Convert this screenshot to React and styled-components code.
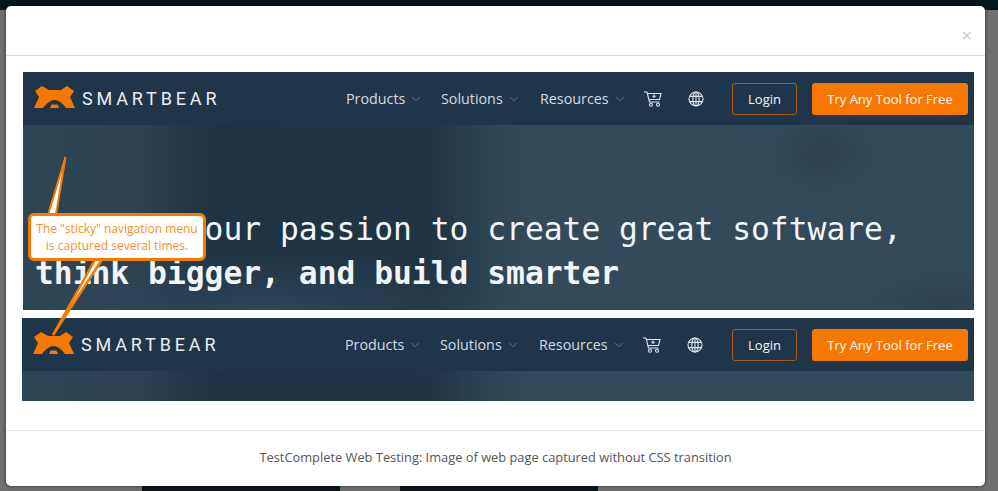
import React from 'react';
import styled, { createGlobalStyle } from 'styled-components';
import { ChevronDown } from 'lucide-react';

const Global = createGlobalStyle`
  html, body { margin: 0; padding: 0; }
  body { font-family: 'Open Sans', sans-serif; background: #6b6b6b; }
`;

const Backdrop = styled.div`
  position: relative;
  width: 998px;
  height: 491px;
  overflow: hidden;
  background: #707070;
`;

const TopBand = styled.div`
  height: 10px;
  background: #06161d;
`;

const BottomBlocks = styled.div`
  position: absolute;
  left: 142px;
  bottom: 0;
  display: flex;
  gap: 60px;
`;

const BottomBlock = styled.div`
  width: 198px;
  height: 8px;
  background: #06161d;
`;

const Modal = styled.div`
  position: absolute;
  left: 6px;
  top: 6px;
  width: 979px;
  height: 480px;
  background: #fff;
  border-radius: 5px;
  box-shadow: 0 0 4px rgba(0, 0, 0, 0.55);
  display: flex;
  flex-direction: column;
`;

const ModalHeader = styled.div`
  flex: none;
  height: 50px;
  box-sizing: border-box;
  border-bottom: 1px solid #dedede;
  display: flex;
  justify-content: flex-end;
  align-items: flex-end;
  padding: 0 13px 11px 0;
`;

const Close = styled.span`
  font-size: 18px;
  line-height: 18px;
  color: #c8c8c8;
`;

const ModalBody = styled.div`
  flex: 1;
  padding: 16px 11px 0 16px;
`;

const Shot = styled.div`
  margin-left: ${(p) => p.$left}px;
  display: flex;
  flex-direction: column;
`;

const Nav = styled.div`
  height: 53px;
  background: #1f364a;
  display: flex;
  align-items: center;
  padding: 0 6px 0 11px;
  flex: none;
`;

const Logo = styled.div`
  display: flex;
  align-items: center;
  gap: 7px;
  width: 312px;
  flex: none;
`;

const LogoMark = styled.svg`
  margin-bottom: 3px;
  flex: none;
`;

const Wordmark = styled.span`
  font-family: 'Roboto', sans-serif;
  font-size: 18px;
  letter-spacing: 3.85px;
  color: #e9eef2;
`;

const NavItem = styled.div`
  display: flex;
  align-items: center;
  gap: 4px;
  font-size: 14.3px;
  color: #d5dce1;
  width: ${(p) => p.$w}px;
  flex: none;
`;

const IconSlot = styled.div`
  width: ${(p) => p.$w}px;
  flex: none;
  display: flex;
  align-items: center;
`;

const Actions = styled.div`
  margin-left: auto;
  display: flex;
  gap: 15px;
`;

const LoginButton = styled.div`
  width: 65px;
  height: 32px;
  box-sizing: border-box;
  border: 1px solid #a85a14;
  border-radius: 3px;
  display: flex;
  align-items: center;
  justify-content: center;
  font-size: 13px;
  color: #f2f4f6;
`;

const TryButton = styled.div`
  width: 156px;
  height: 32px;
  background: #f77700;
  border-radius: 3px;
  display: flex;
  align-items: center;
  justify-content: center;
  font-size: 13px;
  font-weight: 500;
  color: #fff;
`;

const Hero = styled.div`
  height: ${(p) => (p.$tall ? 185 : 30)}px;
  flex: none;
  box-sizing: border-box;
  background:
    ${(p) =>
      p.$tall
        ? `radial-gradient(ellipse 60px 45px at 84% 15%, rgba(30, 50, 66, 0.35), transparent),
    radial-gradient(ellipse 90px 45px at 97% 100%, rgba(30, 50, 66, 0.35), transparent),
    radial-gradient(ellipse 260px 60px at 25% 100%, rgba(48, 72, 90, 0.9), transparent),`
        : ''}
    linear-gradient(90deg, #2e4556 0, #2d4354 12%, #24394a 16%, #1e3343 20%, #1f3445 43%, #283f50 47%, #2f4657 50%, #334a5b 54%, #334a5b 100%);
  display: flex;
  flex-direction: column;
  justify-content: flex-end;
  padding: 0 0 15px 12px;
  color: #f2f5f7;
  font-family: 'DejaVu Sans Mono', 'Liberation Mono', monospace;
  font-size: 31.3px;
  line-height: 44px;
`;

const HeroLine = styled.div`
  white-space: pre;
  font-weight: ${(p) => (p.$bold ? 700 : 400)};
`;

const Gap = styled.div`
  height: 8px;
`;

const ModalFooter = styled.div`
  flex: none;
  height: 56px;
  box-sizing: border-box;
  border-top: 1px solid #e6e6e6;
  padding-bottom: 4px;
  display: flex;
  align-items: center;
  justify-content: center;
  font-size: 12.85px;
  color: #555;
`;

const CalloutLayer = styled.svg`
  position: absolute;
  left: 0;
  top: 0;
  pointer-events: none;
`;

const CalloutBox = styled.div`
  position: absolute;
  left: 28px;
  top: 213px;
  width: 178px;
  height: 48px;
  box-sizing: border-box;
  padding-top: 1px;
  background: #fff;
  border: 3px solid #f77a00;
  border-radius: 6px;
  display: flex;
  align-items: center;
  justify-content: center;
  text-align: center;
  font-size: 12px;
  line-height: 16.5px;
  color: #f8902a;
`;

const BearLogo = () => (
  <LogoMark width="41" height="22" viewBox="0 0 41 22">
    <path
      fill="#f77700"
      fillRule="evenodd"
      d="M0 22 L5 11 L1 5 L8 0 L15 4 L27 4 L33 0 L40 5 L36 11 L41 22 Z M9 22 Q15 14 20.5 14 Q26 14 32 22 Z M16 22 L17.5 18.5 L23.5 18.5 L25 22 Z"
    />
  </LogoMark>
);

const Cart = () => (
  <svg width="18" height="16" viewBox="0 0 18 16" fill="none" stroke="#dfe5e9" strokeWidth="1.1">
    <path d="M0 1 H3 L5.5 11 H15.5" />
    <path d="M3.5 2.5 H17 L15.5 8.5 H5" />
    <path d="M10 3.5 V7 M8.2 5.3 H11.8" />
    <circle cx="7" cy="13.7" r="1.5" />
    <circle cx="14" cy="13.7" r="1.5" />
  </svg>
);

const WorldIcon = () => (
  <svg width="16" height="16" viewBox="0 0 16 16" fill="none" stroke="#dfe5e9" strokeWidth="1.1">
    <circle cx="8" cy="8" r="7" />
    <ellipse cx="8" cy="8" rx="3.2" ry="7" />
    <path d="M8 1 V15 M1.6 5.4 H14.4 M1.6 10.6 H14.4" />
  </svg>
);

const NavBar = () => (
  <Nav>
    <Logo>
      <BearLogo />
      <Wordmark>SMARTBEAR</Wordmark>
    </Logo>
    <NavItem $w={95}>Products <ChevronDown size={14} strokeWidth={1.2} color="#7f8f9c" /></NavItem>
    <NavItem $w={99}>Solutions <ChevronDown size={14} strokeWidth={1.2} color="#7f8f9c" /></NavItem>
    <NavItem $w={104}>Resources <ChevronDown size={14} strokeWidth={1.2} color="#7f8f9c" /></NavItem>
    <IconSlot $w={44}><Cart /></IconSlot>
    <IconSlot $w={20}><WorldIcon /></IconSlot>
    <Actions>
      <LoginButton>Login</LoginButton>
      <TryButton>Try Any Tool for Free</TryButton>
    </Actions>
  </Nav>
);

export default function App() {
  return (
    <>
      <Global />
      <Backdrop>
        <TopBand />
        <BottomBlocks>
          <BottomBlock />
          <BottomBlock />
        </BottomBlocks>
        <Modal>
          <ModalHeader>
            <Close>×</Close>
          </ModalHeader>
          <ModalBody>
            <Shot $left={1}>
              <NavBar />
              <Hero $tall>
                <HeroLine>{'         our passion to create great software,'}</HeroLine>
                <HeroLine $bold>think bigger, and build smarter</HeroLine>
              </Hero>
              <Gap />
            </Shot>
            <Shot $left={0}>
              <NavBar />
              <Hero />
            </Shot>
          </ModalBody>
          <ModalFooter>TestComplete Web Testing: Image of web page captured without CSS transition</ModalFooter>
        </Modal>
        <CalloutLayer width="998" height="491" viewBox="0 0 998 491">
          <path d="M65.5 157 L48 215 L56 215 Z" fill="#fff" stroke="#f77a00" strokeWidth="2" />
          <path d="M96 258 L53 335 L103 258 Z" fill="#fff" stroke="#f77a00" strokeWidth="2.5" />
        </CalloutLayer>
        <CalloutBox>The "sticky" navigation menu<br />is captured several times.</CalloutBox>
      </Backdrop>
    </>
  );
}
